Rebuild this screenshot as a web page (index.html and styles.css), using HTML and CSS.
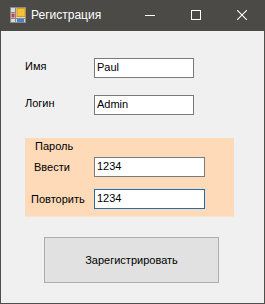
FILE: index.html
```html
<!DOCTYPE html>
<html lang="ru">
<head>
<meta charset="UTF-8">
<title>Регистрация</title>
<link rel="stylesheet" href="styles.css">
</head>
<body>
<div class="win">
    <div class="win-title">
        <svg class="win-icon" width="16" height="16" viewBox="0 0 16 16">
            <rect x="0.5" y="0.5" width="15" height="15" fill="#d8d8d8" stroke="#8a8a8a"/>
            <line x1="5.5" y1="1" x2="5.5" y2="15" stroke="#8a8a8a"/>
            <line x1="1" y1="5.5" x2="5" y2="5.5" stroke="#8a8a8a"/>
            <line x1="1" y1="11.5" x2="15" y2="11.5" stroke="#8a8a8a"/>
            <rect x="7" y="1.5" width="8" height="8" fill="#f2c23a" stroke="#d99a1c"/>
            <rect x="1.5" y="6.5" width="3" height="4" fill="#d23c3c"/>
            <rect x="7" y="12" width="7" height="3" fill="#4d7fd0"/>
        </svg>
        <span class="win-caption">Регистрация</span>
        <div class="win-ctrls">
            <span class="ctrl"><svg width="10" height="10" viewBox="0 0 10 10"><line x1="0" y1="5.5" x2="10" y2="5.5" stroke="#fff"/></svg></span>
            <span class="ctrl"><svg width="10" height="10" viewBox="0 0 10 10"><rect x="0.5" y="0.5" width="9" height="9" fill="none" stroke="#fff"/></svg></span>
            <span class="ctrl"><svg width="10" height="10" viewBox="0 0 10 10"><path d="M0 0L10 10M10 0L0 10" stroke="#fff" stroke-width="1.1"/></svg></span>
        </div>
    </div>
    <div class="win-body">
        <div class="field">
            <label class="lbl">Имя</label>
            <div class="tb">Paul</div>
        </div>
        <div class="field">
            <label class="lbl">Логин</label>
            <div class="tb">Admin</div>
        </div>
        <div class="group">
            <div class="group-title">Пароль</div>
            <div class="gfield">
                <label class="glbl enter">Ввести</label>
                <div class="tb wide">1234</div>
            </div>
            <div class="gfield">
                <label class="glbl repeat">Повторить</label>
                <div class="tb wide focus">1234</div>
            </div>
        </div>
        <button class="btn">Зарегистрировать</button>
    </div>
</div>
</body>
</html>
```

FILE: styles.css
```css
body {
    margin: 0;
    background: #f0f0f0;
    font-family: "Liberation Sans", Arial, sans-serif;
    font-size: 11px;
    color: #000;
}
.win {
    width: 265px;
    height: 304px;
    box-sizing: border-box;
    border: 1px solid #4f4e4b;
    border-top: none;
    background: #f0f0f0;
    display: flex;
    flex-direction: column;
}
.win-title {
    height: 31px;
    margin: 0 -1px;
    background: #4b4a47;
    display: flex;
    align-items: center;
    color: #fff;
}
.win-icon {
    margin-left: 10px;
    margin-top: -1px;
}
.win-caption {
    margin-left: 5px;
    font-size: 12px;
    margin-top: -1px;
}
.win-ctrls {
    margin-left: auto;
    display: flex;
    height: 100%;
}
.ctrl {
    width: 46px;
    display: flex;
    align-items: center;
    justify-content: center;
    margin-top: -1px;
}
.win-body {
    padding: 27px 0 0 24px;
    display: flex;
    flex-direction: column;
    align-items: flex-start;
}
.field {
    display: flex;
    align-items: flex-start;
    margin-bottom: 17px;
}
.lbl {
    width: 69px;
    line-height: 13px;
    margin-top: 2px;
}
.tb {
    width: 100px;
    height: 20px;
    box-sizing: border-box;
    border: 1px solid #7a7a7a;
    background: #fff;
    padding: 0 2px;
    line-height: 17px;
    font-size: 11px;
}
.tb.wide {
    width: 111px;
}
.tb.focus {
    border-color: #1f6fae;
}
.group {
    margin-top: 6px;
    width: 209px;
    height: 79px;
    box-sizing: border-box;
    background: #fedab9;
    border-bottom: 1px solid #fbe2cb;
    padding-top: 2px;
}
.group-title {
    line-height: 13px;
    padding-left: 10px;
    margin-bottom: 4px;
}
.gfield {
    display: flex;
    align-items: center;
    margin-bottom: 12px;
}
.glbl {
    width: 69px;
    box-sizing: border-box;
}
.glbl.enter {
    padding-left: 9px;
}
.glbl.repeat {
    padding-left: 6px;
}
.btn {
    margin: 20px 0 0 19px;
    width: 175px;
    height: 46px;
    background: #e1e1e1;
    border: 1px solid #adadad;
    font-family: "Liberation Sans", Arial, sans-serif;
    font-size: 11px;
    color: #000;
    padding: 0;
}
```
